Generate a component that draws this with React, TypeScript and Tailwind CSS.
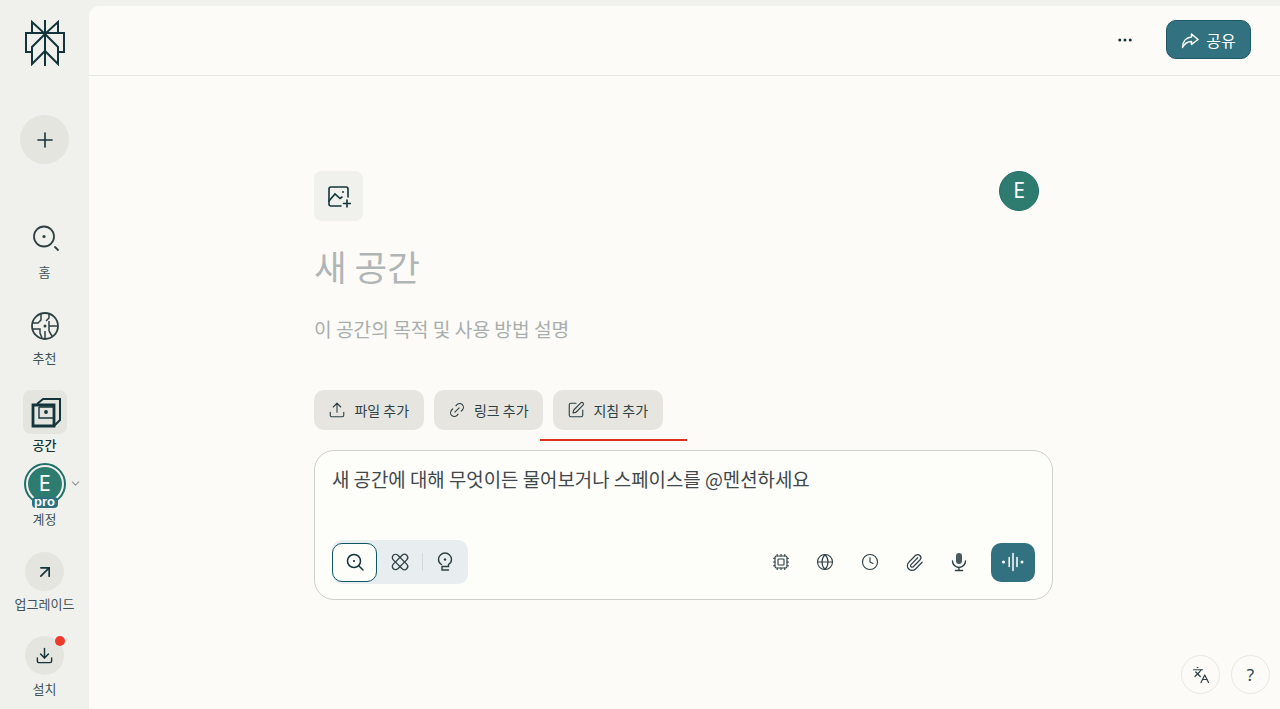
import React from "react";
import { Plus, Ellipsis, Upload, Link2, SquarePen, Cpu, Globe, Clock, Paperclip, ChevronDown, ArrowUpRight, Download, Languages } from "lucide-react";

const font = { fontFamily: '"Noto Sans CJK KR", "Noto Sans", sans-serif' };

function Logo() {
  return (
    <svg width="40" height="46" viewBox="0 0 40 46" fill="none" stroke="#13343b" strokeWidth="2" className="block">
      <path d="M20 0V46" />
      <path d="M7 2L20 14L33 2V13H7Z" />
      <path d="M20 14L7 27V44L20 31L33 44V27Z" />
      <path d="M7 13H1V32H7M33 13H39V32H33" />
    </svg>
  );
}
function HomeIcon() {
  return (
    <svg width="30" height="30" viewBox="0 0 30 30" fill="none" stroke="#2f4045" strokeWidth="1.8">
      <circle cx="14" cy="13.5" r="10" />
      <circle cx="14" cy="13.5" r="1.6" fill="#2f4045" stroke="none" />
      <path d="M25 24L28 27" strokeLinecap="round" />
    </svg>
  );
}
function DiscoverIcon() {
  return (
    <svg width="30" height="30" viewBox="0 0 30 30" fill="none" stroke="#2f4045" strokeWidth="1.5">
      <circle cx="15" cy="15" r="13" strokeWidth="1.8" />
      <circle cx="15" cy="15" r="1.5" fill="#2f4045" stroke="none" />
      <path d="M11 3V9L8 12H2M19 3V7L16 10M19 10V20M19 15H27M2 18H10V22L12 27M15 20V28M19 20L22 25" />
    </svg>
  );
}
function SpaceIcon() {
  return (
    <svg width="32" height="32" viewBox="0 0 32 32" fill="none" stroke="#13343b" strokeWidth="2">
      <path d="M8 8L14 3H31V24L25 30" />
      <path d="M4 9H25V30H4Z" strokeWidth="2.8" />
      <path d="M10 11H25M10 11V22H25" strokeWidth="1.4" />
      <circle cx="17" cy="16" r="1.9" fill="#13343b" stroke="none" />
    </svg>
  );
}
function Orbit() {
  return (
    <svg width="20" height="20" viewBox="0 0 20 20" fill="none" stroke="#2f4045" strokeWidth="1.3">
      <rect x="0.5" y="6.75" width="19" height="6.5" rx="3.25" transform="rotate(45 10 10)" />
      <rect x="0.5" y="6.75" width="19" height="6.5" rx="3.25" transform="rotate(-45 10 10)" />
    </svg>
  );
}
function Bulb() {
  return (
    <svg width="18" height="20" viewBox="0 0 18 20" fill="none" stroke="#2f4045" strokeWidth="1.4">
      <path d="M5.500 12.500C3.500 11.300 2.500 9.500 2.500 7.500A6.500 6.500 0 0 1 15.500 7.500C15.500 9.500 14.500 11.300 12.500 12.500V14.500H6V18H12.500" strokeLinecap="round" />
      <circle cx="9" cy="7.500" r="1.200" fill="#2f4045" stroke="none" />
    </svg>
  );
}
function SearchDot() {
  return (
    <svg width="20" height="20" viewBox="0 0 20 20" fill="none" stroke="#13343b" strokeWidth="1.5">
      <circle cx="9" cy="9" r="6.500" />
      <circle cx="9" cy="9" r="1.100" fill="#13343b" stroke="none" />
      <path d="M13.800 13.800L18 18" strokeLinecap="round" />
    </svg>
  );
}
function Wave() {
  return (
    <svg width="24" height="24" viewBox="0 0 24 24" fill="none" stroke="#fff" strokeLinecap="round">
      <path d="M2.500 12V12.100M21 12V12.100" strokeWidth="3" />
      <path d="M8.200 7.500V16.500M16 7.500V16.500" strokeWidth="1.500" />
      <path d="M12 3.500V20.500" strokeWidth="1.500" />
    </svg>
  );
}
function ShareArrow() {
  return (
    <svg width="18" height="18" viewBox="0 0 18 18" fill="none" stroke="#fff" strokeWidth="1.5" strokeLinejoin="round">
      <path d="M10.500 3L17 8.500L10.500 13.500V10.500C6.500 10.500 3.500 12.500 1.500 16.500C1.500 10.500 5 6.500 10.500 6Z" />
    </svg>
  );
}
function ImageAdd() {
  return (
    <svg width="24" height="24" viewBox="0 0 24 24" fill="none" stroke="#13343b" strokeWidth="1.6" strokeLinecap="round">
      <path d="M21 13V5A2 2 0 0 0 19 3H4A2 2 0 0 0 2 5V20A2 2 0 0 0 4 22H14" />
      <path d="M2 17L8 10L13 14.500L15 13" />
      <circle cx="16" cy="8" r="1" fill="#13343b" stroke="none" />
      <path d="M20 16V23M16.500 19.500H23.500" />
    </svg>
  );
}
function MicFilled() {
  return (
    <svg width="20" height="20" viewBox="0 0 20 20" fill="none" stroke="#2f4045" strokeWidth="1.4" strokeLinecap="round">
      <rect x="7" y="1" width="6" height="11" rx="3" fill="#4a5a5e" stroke="none" />
      <path d="M3.500 9A6.500 6.500 0 0 0 16.500 9M10 15.500V18.500M6.500 18.500H13.500" />
    </svg>
  );
}

function NavLabel({ children, bold }: { children: React.ReactNode; bold?: boolean }) {
  return (
    <span className={`block text-[13px] leading-[16px] whitespace-nowrap ${bold ? "font-medium text-[#13343b]" : "text-[#3f5156]"}`}>{children}</span>
  );
}

function Sidebar() {
  return (
    <aside className="w-[89px] shrink-0 h-full flex flex-col items-center bg-[#f0f1ec] pt-[20px]">
      <Logo />
      <button className="mt-[49px] w-[49px] h-[49px] rounded-full bg-[#e5e5e0] flex items-center justify-center">
        <Plus size={24} strokeWidth={1.600} color="#13343b" />
      </button>
      <div className="mt-[59px] flex flex-col items-center">
        <HomeIcon />
        <div className="mt-[11px]"><NavLabel>홈</NavLabel></div>
      </div>
      <div className="mt-[31px] flex flex-col items-center">
        <DiscoverIcon />
        <div className="mt-[9px]"><NavLabel>추천</NavLabel></div>
      </div>
      <div className="mt-[24px] flex flex-col items-center">
        <div className="w-[44px] h-[44px] rounded-[8px] bg-[#e5e5e0] flex items-center justify-center">
          <SpaceIcon />
        </div>
        <div className="mt-[3px]"><NavLabel bold>공간</NavLabel></div>
      </div>
      <div className="mt-[10px] flex flex-col items-center relative">
        <div className="w-[42px] h-[42px] rounded-full border-2 border-[#1f6f6a] p-[2px] bg-[#f0f1ec]">
          <div className="w-full h-full rounded-full bg-[#2e7b70] text-white flex items-center justify-center text-[22px] leading-none pb-[5px]" style={{ fontFamily: '"Noto Sans", sans-serif' }}>E</div>
        </div>
        <span className="absolute left-[8px] top-[34px] w-[26px] h-[11px] rounded-[4px] bg-[#2e7280] text-white text-[13px] leading-[9px] font-bold text-center" style={{ fontFamily: '"Liberation Sans", sans-serif' }}>pro</span>
        <ChevronDown size={13} color="#8a9699" className="absolute left-[45px] top-[14px]" />
        <div className="mt-[6px]"><NavLabel>계정</NavLabel></div>
      </div>
      <div className="mt-[25px] flex flex-col items-center">
        <div className="w-[39px] h-[39px] rounded-full bg-[#e5e5e0] flex items-center justify-center">
          <ArrowUpRight size={20} strokeWidth={2} color="#13343b" />
        </div>
        <div className="mt-[5px]"><NavLabel>업그레이드</NavLabel></div>
      </div>
      <div className="mt-[24px] flex flex-col items-center">
        <div className="relative w-[39px] h-[39px] rounded-full bg-[#e5e5e0] flex items-center justify-center">
          <Download size={19} strokeWidth={1.800} color="#13343b" />
          <span className="absolute right-[-1px] top-0 w-[10px] h-[10px] rounded-full bg-[#ee3a2c]" />
        </div>
        <div className="mt-[6px]"><NavLabel>설치</NavLabel></div>
      </div>
    </aside>
  );
}

function Chip({ icon, children }: { icon: React.ReactNode; children: React.ReactNode }) {
  return (
    <button className="h-[40px] w-[109.500px] rounded-[10px] bg-[#e6e5e0] flex items-center justify-center gap-[8px] text-[14px] text-[#2f4045]">
      {icon}
      <span>{children}</span>
    </button>
  );
}

function Composer() {
  const tools = [Cpu, Globe, Clock, Paperclip];
  return (
    <div className="mt-[20px] w-[739px] h-[150px] rounded-[20px] border border-[#cfd0ca] bg-[#fdfdfa] px-[17px] pt-[16px] pb-[15px] flex flex-col justify-between">
      <p className="text-[18.900px] leading-[24px] text-[#40484b]">새 공간에 대해 무엇이든 물어보거나 스페이스를 @멘션하세요</p>
      <div className="flex items-center justify-between">
        <div className="w-[136px] h-[44px] rounded-[10px] bg-[#e8eeef] flex items-center">
          <div className="w-[45px] h-[39px] rounded-[10px] border border-[#0f5663] bg-[#fdfdfa] flex items-center justify-center">
            <SearchDot />
          </div>
          <div className="w-[45px] flex items-center justify-center"><Orbit /></div>
          <div className="w-px h-[18px] bg-[#d3d8d8]" />
          <div className="w-[44px] flex items-center justify-center"><Bulb /></div>
        </div>
        <div className="flex items-center">
          {tools.map((I, i) => (
            <div key={i} className="w-[44.500px] flex items-center justify-center"><I size={i === 3 ? 19 : 18} strokeWidth={1.500} color="#2f4045" /></div>
          ))}
          <div className="w-[44.500px] flex items-center justify-center"><MicFilled /></div>
          <button className="ml-[10px] w-[44px] h-[39px] rounded-[10px] bg-[#32717f] flex items-center justify-center"><Wave /></button>
        </div>
      </div>
    </div>
  );
}

export default function App() {
  return (
    <div className="w-[1280px] h-[709px] flex overflow-hidden bg-[#f0f1ec]" style={font}>
      <Sidebar />
      <main className="relative flex-1 mt-[6px] rounded-tl-[10px] bg-[#fcfbf7] flex flex-col">
        <header className="h-[70px] shrink-0 border-b border-[#e8e8e3] flex items-center justify-end pr-[29px] pb-[2px]">
          <Ellipsis size={18} strokeWidth={2} color="#13343b" className="mr-[32px]" />
          <button className="w-[85px] h-[39px] rounded-[10px] bg-[#32717f] border border-[#1f5a68] text-white text-[16px] flex items-center justify-center gap-[7px]">
            <ShareArrow />공유
          </button>
        </header>
        <div className="pl-[225px] flex flex-col items-start">
          <div className="w-[739px] relative">
            <div className="mt-[95px] w-[49px] h-[50px] rounded-[8px] bg-[#f0f1ec] flex items-center justify-center">
              <ImageAdd />
            </div>
            <div className="absolute right-[14px] top-[95px] w-[40px] h-[40px] rounded-full bg-[#2e7b70] border border-[#1f6f6a] text-white text-[21px] flex items-center justify-center" style={{ fontFamily: '"Noto Sans", sans-serif' }}>E</div>
            <h1 className="mt-[20px] text-[35.500px] leading-[50px] font-normal text-[#b0b5b5]">새 공간</h1>
            <p className="mt-[25px] text-[19.200px] leading-[26px] text-[#a9aeae]">이 공간의 목적 및 사용 방법 설명</p>
            <div className="mt-[48px] flex gap-[10px]">
              <Chip icon={<Upload size={18} strokeWidth={1.500} color="#2f4045" />}>파일 추가</Chip>
              <Chip icon={<Link2 size={18} strokeWidth={1.500} color="#2f4045" className="-rotate-45" />}>링크 추가</Chip>
              <Chip icon={<SquarePen size={18} strokeWidth={1.500} color="#2f4045" />}>지침 추가</Chip>
            </div>
            <div className="absolute left-[226px] top-[363px] w-[147px] h-[2px] bg-[#e0301e]" />
            <Composer />
          </div>
        </div>
        <div className="absolute right-[10px] bottom-[15px] flex gap-[11px]">
          <div className="w-[39px] h-[39px] rounded-full border border-[#e8e8e3] bg-[#fcfbf7] flex items-center justify-center">
            <Languages size={18} strokeWidth={1.600} color="#2f4045" />
          </div>
          <div className="w-[39px] h-[39px] rounded-full border border-[#e8e8e3] bg-[#fcfbf7] flex items-center justify-center text-[17px] text-[#2f4045]" style={{ fontFamily: '"Noto Sans", sans-serif' }}>?</div>
        </div>
      </main>
    </div>
  );
}
